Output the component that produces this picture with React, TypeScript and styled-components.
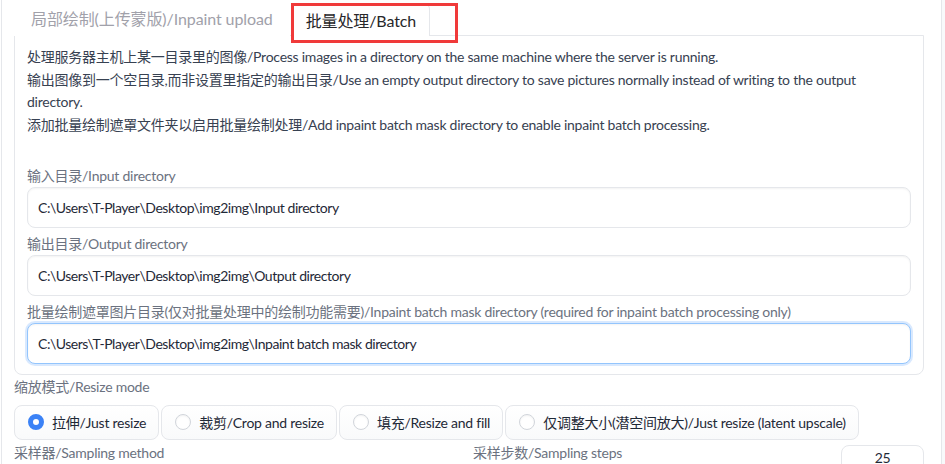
import React from 'react';
import styled, { createGlobalStyle } from 'styled-components';

const GlobalStyle = createGlobalStyle`
  html, body {
    margin: 0;
    padding: 0;
    background: #ffffff;
  }
  body {
    font-family: Lato, "Noto Sans CJK SC", sans-serif;
    font-size: 14px;
    letter-spacing: -0.25px;
    color: #374151;
  }
`;

const Page = styled.div`
  display: flex;
  height: 464px;
  overflow: hidden;
  padding-left: 1px;
`;

const Main = styled.div`
  width: 941px;
  box-sizing: border-box;
  border-left: 1px solid #e5e7eb;
  border-right: 1px solid #e5e7eb;
  padding: 0 17px 0 12px;
  flex-shrink: 0;
`;

const SideFill = styled.div`
  flex: 1;
  background: #f8f9fb;
`;

const TabBar = styled.div`
  display: flex;
  align-items: flex-end;
  height: 35px;
  gap: 1px;
`;

const Tab = styled.div<{ $active?: boolean }>`
  position: relative;
  display: flex;
  align-items: center;
  box-sizing: border-box;
  height: ${(p) => (p.$active ? '33px' : '35px')};
  padding: ${(p) => (p.$active ? '0 13px 0 14px' : '0 16px 2px 16px')};
  font-size: 16px;
  letter-spacing: -0.1px;
  color: ${(p) => (p.$active ? '#27272a' : '#a1a1aa')};
  background: #fff;
  border: 1px solid ${(p) => (p.$active ? '#e5e7eb' : 'transparent')};
  border-bottom: none;
  border-radius: 6px 6px 0 0;
  margin-bottom: -1px;
  z-index: 1;
`;

const Highlight = styled.div`
  position: absolute;
  left: -1px;
  top: -1px;
  width: 167px;
  height: 40px;
  box-sizing: border-box;
  border: 3px solid #f03a3a;
  pointer-events: none;
`;

const Panel = styled.div`
  border: 1px solid #e5e7eb;
  border-radius: 0 0 8px 8px;
  padding: 10px 12px 10px 12px;
`;

const Info = styled.div`
  line-height: 22.7px;
  color: #374151;
  margin-bottom: 29px;
`;

const Field = styled.div`
  display: flex;
  flex-direction: column;
  gap: 1px;
  & + & {
    margin-top: 6px;
  }
`;

const Label = styled.div`
  height: 20px;
  line-height: 20px;
  color: #6b7280;
  white-space: nowrap;
`;

const PathBox = styled.div<{ $focused?: boolean }>`
  height: 41px;
  box-sizing: border-box;
  display: flex;
  align-items: center;
  padding: 0 10px;
  letter-spacing: -0.45px;
  border: 1px solid ${(p) => (p.$focused ? '#93c5fd' : '#e5e7eb')};
  border-radius: 8px;
  color: #1f2937;
  background: #fff;
  box-shadow: ${(p) =>
    p.$focused
      ? '0 0 0 2px rgba(191, 219, 254, 0.6), inset 0 1px 2px rgba(0,0,0,0.05)'
      : 'inset 0 1px 2px rgba(0,0,0,0.05)'};
`;

const Section = styled.div`
  margin-top: 2px;
`;

const RadioRow = styled.div`
  display: flex;
  gap: 2px;
  margin-top: 8px;
`;

const Option = styled.div`
  height: 35px;
  box-sizing: border-box;
  display: flex;
  align-items: center;
  gap: 8px;
  padding: 0 12px 0 13px;
  border: 1px solid #e5e7eb;
  border-radius: 8px;
  background: linear-gradient(to top, #f9fafb, #ffffff);
  color: #1f2937;
`;

const Radio = styled.span<{ $checked?: boolean }>`
  width: 16px;
  height: 16px;
  box-sizing: border-box;
  border-radius: 50%;
  border: ${(p) => (p.$checked ? '5px solid #3b82f6' : '1px solid #d1d5db')};
  background: #fff;
  box-shadow: ${(p) => (p.$checked ? 'none' : 'inset 0 1px 2px rgba(0,0,0,0.05)')};
`;

const BottomRow = styled.div`
  display: grid;
  grid-template-columns: 1fr 1fr;
  gap: 8px;
  margin-top: 3px;
`;

const SliderHead = styled.div`
  display: flex;
  justify-content: space-between;
  align-items: flex-start;
`;

const NumberBox = styled.div`
  width: 83px;
  height: 36px;
  margin-top: 2px;
  box-sizing: border-box;
  border: 1px solid #e5e7eb;
  border-radius: 8px;
  text-align: center;
  padding-top: 3px;
  color: #1f2937;
`;

const options = [
  { label: '拉伸/Just resize', checked: true },
  { label: '裁剪/Crop and resize' },
  { label: '填充/Resize and fill' },
  { label: '仅调整大小(潜空间放大)/Just resize (latent upscale)' },
];

const App: React.FC = () => {
  return (
    <>
      <GlobalStyle />
      <Page>
        <Main>
          <TabBar>
            <Tab>局部绘制(上传蒙版)/Inpaint upload</Tab>
            <Tab $active>
              批量处理/Batch
              <Highlight />
            </Tab>
          </TabBar>
          <Panel>
            <Info>
              处理服务器主机上某一目录里的图像/Process images in a directory on the same machine where the server is running.
              <br />
              输出图像到一个空目录,而非设置里指定的输出目录/Use an empty output directory to save pictures normally instead of writing to the output directory.
              <br />
              添加批量绘制遮罩文件夹以启用批量绘制处理/Add inpaint batch mask directory to enable inpaint batch processing.
            </Info>
            <Field>
              <Label>输入目录/Input directory</Label>
              <PathBox>C:\Users\T-Player\Desktop\img2img\Input directory</PathBox>
            </Field>
            <Field>
              <Label>输出目录/Output directory</Label>
              <PathBox>C:\Users\T-Player\Desktop\img2img\Output directory</PathBox>
            </Field>
            <Field>
              <Label>批量绘制遮罩图片目录(仅对批量处理中的绘制功能需要)/Inpaint batch mask directory (required for inpaint batch processing only)</Label>
              <PathBox $focused>C:\Users\T-Player\Desktop\img2img\Inpaint batch mask directory</PathBox>
            </Field>
          </Panel>
          <Section>
            <Label>缩放模式/Resize mode</Label>
            <RadioRow>
              {options.map((o) => (
                <Option key={o.label}>
                  <Radio $checked={o.checked} />
                  {o.label}
                </Option>
              ))}
            </RadioRow>
          </Section>
          <BottomRow>
            <Label>采样器/Sampling method</Label>
            <SliderHead>
              <Label>采样步数/Sampling steps</Label>
              <NumberBox>25</NumberBox>
            </SliderHead>
          </BottomRow>
        </Main>
        <SideFill />
      </Page>
    </>
  );
};

export default App;
